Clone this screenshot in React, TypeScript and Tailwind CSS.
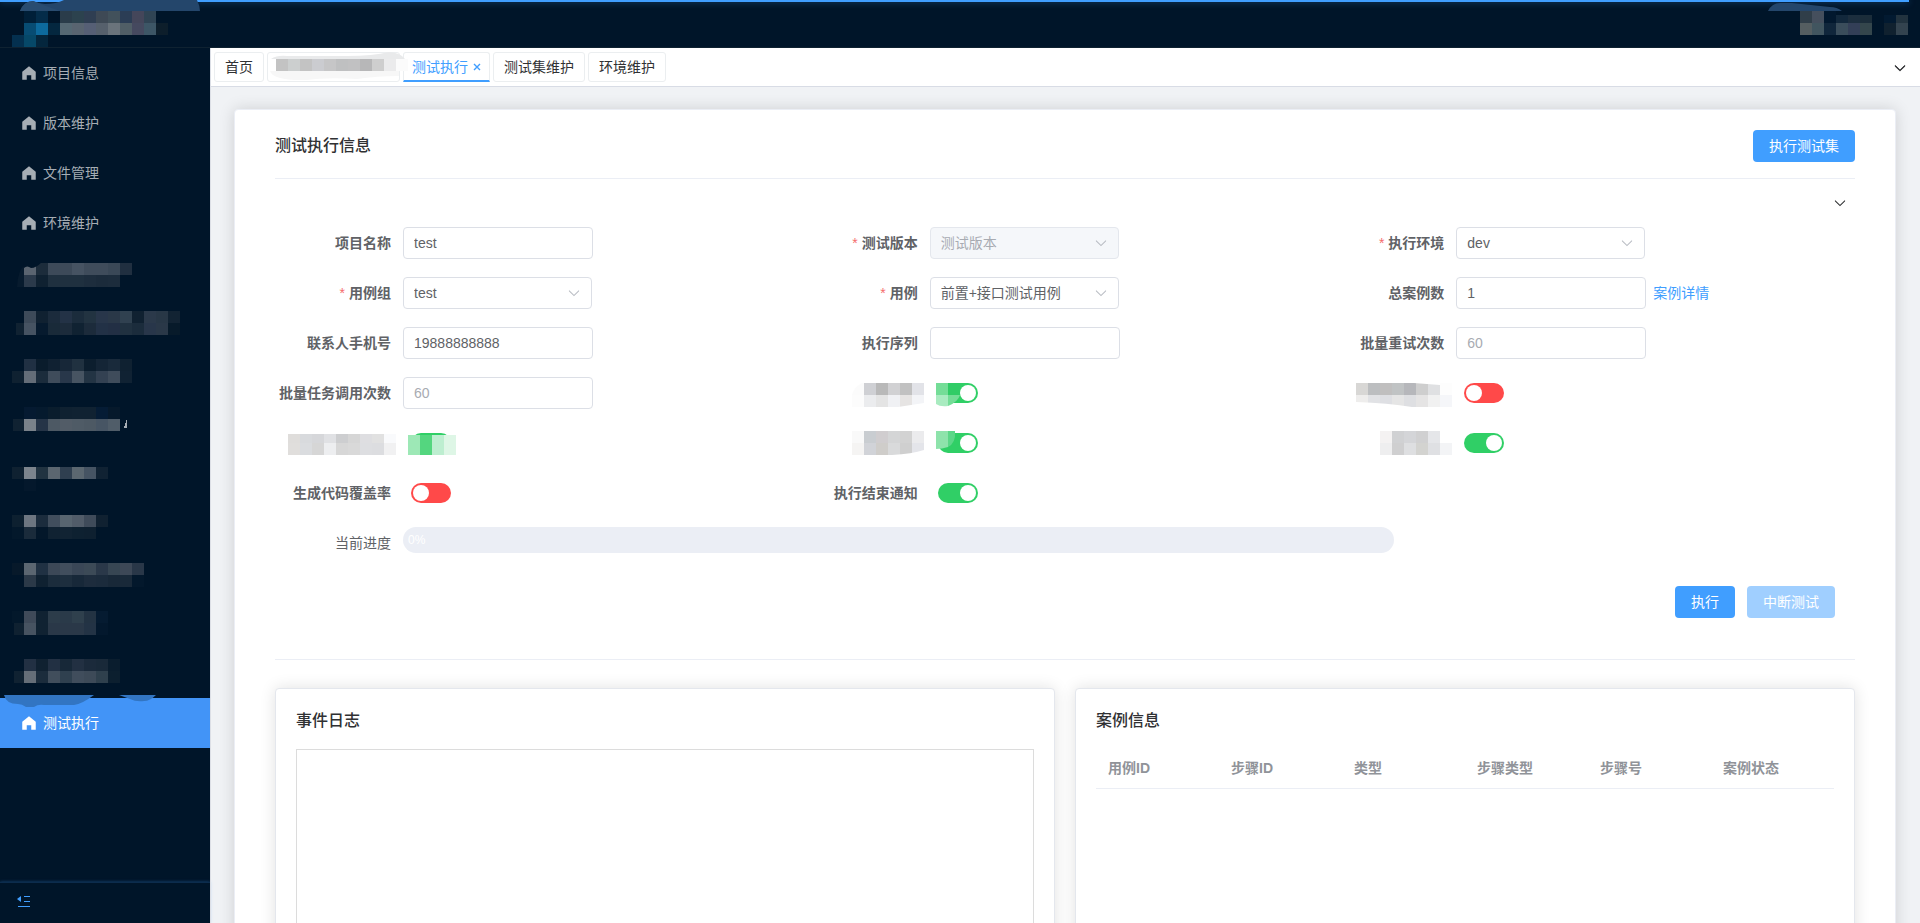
import { useState } from "react";
import type { ReactNode } from "react";

type Strip = { x: number; y: number; h?: number; c: string };

// One strip is a row of 12px blocks, colours listed left to right.
function Mosaic({ strips }: { strips: Strip[] }) {
  return (
    <>
      {strips.map((s, i) =>
        s.c.split(" ").map((c, j) => (
          <rect
            key={`${i}-${j}`}
            x={s.x + j * 12}
            y={s.y}
            width={12}
            height={s.h ?? 12}
            fill={`#${c}`}
            shapeRendering="crispEdges"
          />
        ))
      )}
    </>
  );
}

const hiddenMenus: Strip[][] = [
  [
    { x: 24, y: 15, c: "5a6470 1c2c3b 3d4a59 3d4a59 465362 3f4c5b 3f4c5b 3a4857 202f40" },
    { x: 24, y: 27, c: "2b3a4b 0f2131 1f303f 1f303f 1f303f 1d2d3d 1b2b3b 1c2c3c" },
  ],
  [
    { x: 24, y: 13, c: "3d4a59 102131 1b2b3c 233246 1b2c3c 223341 28364a 2a3848 304150 102131 2b394a 283746 122333" },
    { x: 16, y: 25, c: "102232" },
    { x: 24, y: 25, c: "465362 061a2e 192a39 1c2b3b 102232 1c2b3b 223146 222f44 203140 1b2c3c 28364a 2a3848 071a2a" },
  ],
  [
    { x: 24, y: 11, c: "203043 0a1c2c 102132 172738 203140 0c1e2e 142536 192a3b 0f2131" },
    { x: 12, y: 23, c: "0f2131 646d78 1b2c3c 3f4c5b 28374a 475462 233444 334152 3f4c5b 102233" },
  ],
  [
    { x: 24, y: 9, c: "051a31 051a2e 0a1d2d 0f2131 102232 102232 051c35 06192b" },
    { x: 13, y: 21, c: "102232" },
    { x: 24, y: 21, c: "7a828a 253447 4d5964 525c67 4f5b66 4d5964 475564 505d69" },
  ],
  [
    { x: 12, y: 19, c: "0f2131 7c848d 213341 5b6670 2f3f50 5b6770 465463 102233" },
    { x: 24, y: 31, c: "04182c" },
  ],
  [
    { x: 12, y: 17, c: "0d2030 6d7681 1b2c3d 414e5d 586570 515c69 3f4b5a 102131" },
    { x: 12, y: 29, c: "03182b 1a2b3b 03172a 102232 112333 0e2131 0e2030" },
  ],
  [
    { x: 12, y: 15, c: "07192a 5b6671 203143 3c4857 414e5d 3a4757 3c4a57 2a3849 374653 3d4857 293748" },
    { x: 24, y: 27, c: "2b3948 0f2131 1b2c3c 1d2e3e 172839 1d2c3d 1b2b3c 182838 192939 03182c" },
  ],
  [
    { x: 12, y: 13, c: "03182b 3f4a59 102232 2c3c4a 2a3a49 2f404d 233343 051b31" },
    { x: 14, y: 25, c: "0f2131" },
    { x: 24, y: 25, c: "475361 102232 2a3848 2a3848 2a3848 233345 03182d" },
  ],
  [
    { x: 24, y: 11, c: "223043 102131 223043 172838 223042 1b2a3b 192939 0a1d2e" },
    { x: 14, y: 23, c: "102232" },
    { x: 24, y: 23, c: "656e78 1b2c3c 414e5c 2f404f 404d5c 3d4a58 2f404d 0c1f2f" },
  ],
];

const menus = ["项目信息", "版本维护", "文件管理", "环境维护"];

const columns = ["用例ID", "步骤ID", "类型", "步骤类型", "步骤号", "案例状态"];

function HomeIcon() {
  return (
    <svg viewBox="0 0 1024 1024" className="size-[18px] shrink-0" fill="currentColor">
      <path d="M512 128 128 447.936V896h255.936V640H640v256h255.936V447.936z" />
    </svg>
  );
}

function ArrowDown({ weight = 0 }: { weight?: number }) {
  return (
    <svg
      viewBox="0 0 1024 1024"
      className="size-3.5"
      fill="currentColor"
      stroke="currentColor"
      strokeWidth={weight}
    >
      <path d="M831.872 340.864 512 652.672 192.128 340.864a30.592 30.592 0 0 0-42.752 0 29.12 29.12 0 0 0 0 41.6L489.664 714.24a32 32 0 0 0 44.672 0l340.288-331.712a29.12 29.12 0 0 0 0-41.728 30.592 30.592 0 0 0-42.752 0z" />
    </svg>
  );
}

function Field({
  id,
  label,
  required,
  children,
}: {
  id: string;
  label?: string;
  required?: boolean;
  children: ReactNode;
}) {
  return (
    <div className="relative flex h-8 items-center">
      <label htmlFor={id} className="w-32 shrink-0 pr-3 text-right font-bold whitespace-nowrap">
        {required && <span className="mr-1 font-normal text-[#f56c6c]">*</span>}
        {label}
      </label>
      {children}
    </div>
  );
}

function TextInput({ id, value, placeholder }: { id: string; value?: string; placeholder?: string }) {
  return (
    <input
      id={id}
      type="text"
      defaultValue={value}
      placeholder={placeholder}
      className="h-8 w-[190px] rounded border border-[#dcdfe6] bg-white px-2.5 outline-none placeholder:text-[#a8abb2] focus:border-[#409eff]"
    />
  );
}

function Select({ id, value, disabled }: { id: string; value: string; disabled?: boolean }) {
  return (
    <div className="relative w-[189px]">
      <select
        id={id}
        disabled={disabled}
        className="h-8 w-full appearance-none rounded border border-[#dcdfe6] bg-white px-2.5 outline-none disabled:border-[#e4e7ed] disabled:bg-[#f5f7fa] disabled:text-[#a8abb2] disabled:opacity-100"
      >
        <option>{value}</option>
      </select>
      <span className="pointer-events-none absolute inset-y-0 right-[11px] flex items-center text-[#b4b8bf]">
        <ArrowDown weight={20} />
      </span>
    </div>
  );
}

function Switch({ id, on, name }: { id: string; on?: boolean; name?: string }) {
  return (
    <input
      id={id}
      type="checkbox"
      role="switch"
      aria-label={name}
      defaultChecked={on}
      className="relative ml-2 h-5 w-10 cursor-pointer appearance-none rounded-full bg-[#ff4949] before:absolute before:top-0.5 before:left-0.5 before:size-4 before:rounded-full before:bg-white checked:bg-[#30cf66] checked:before:left-[22px]"
    />
  );
}

function Cover({ strips, children }: { strips: Strip[]; children?: ReactNode }) {
  return (
    <svg className="pointer-events-none absolute top-0 left-0 h-8 w-[190px]" viewBox="0 0 190 32">
      <Mosaic strips={strips} />
      {children}
    </svg>
  );
}

export default function App() {
  const [tab, setTab] = useState("测试执行");

  return (
    <div className="flex h-screen flex-col overflow-hidden bg-[#f0f2f5] font-['Liberation_Sans','Noto_Sans_CJK_SC',sans-serif] text-sm text-[#606266]">
      <header className="relative flex h-12 shrink-0 justify-between border-b border-[#0f2231] bg-[#001529]">
        <div className="absolute top-0 right-[11px] left-0 h-0.5 bg-[#409eff] shadow-[0_0_6px_#409eff80]" />
        <svg viewBox="0 0 210 48" className="relative h-12 w-[210px]">
          <path
            d="M20 11Q24 1 33 1Q39 4 45 4Q56 4 64 0H197Q200 6 200 11Z"
            fill="#24466b"
          />
          <path d="M20 11Q24 1 33 1Q39 3 46 6L60 11Z" fill="#294c70" />
          <Mosaic
            strips={[
              { x: 24, y: 11, c: "001f38 042c49" },
              { x: 60, y: 11, c: "2a3c4a 2c424e 2f3e52 3e4955 42515b 2b3d55 44465a 304454" },
              { x: 24, y: 23, c: "074c73 0d6a9d 04273f 556873 596470 565f75 56606c 6a737b 505e66 45495f 3d5666 0d1e2b" },
              { x: 12, y: 35, c: "04304f 064868 04263d" },
            ]}
          />
        </svg>
        <svg viewBox="0 0 160 48" className="relative h-12 w-40">
          <path d="M8 11Q12 3 20 3H32L70 7Q77 7 82 11Z" fill="#24466b" />
          <Mosaic
            strips={[
              { x: 40, y: 11, c: "303e49 454f5d 02182e" },
              { x: 76, y: 15, h: 8, c: "12283c 1c2e3e 1b2d3a" },
              { x: 124, y: 15, h: 8, c: "021a31 22333f" },
              { x: 40, y: 23, c: "555e61 41555f 10263b 3a4d5b 333f57 34464c" },
              { x: 124, y: 23, c: "10212f 33434f" },
            ]}
          />
        </svg>
      </header>

      <div className="flex min-h-0 flex-1">
        <aside className="flex w-[210px] shrink-0 flex-col bg-[#001529] text-[#a6adb4]">
          <nav className="flex-1">
            {menus.map((name) => (
              <a key={name} href="#" className="flex h-[50px] items-center gap-[5px] px-5">
                <HomeIcon />
                {name}
              </a>
            ))}
            {hiddenMenus.map((strips, i) => (
              <svg key={i} viewBox="0 0 210 50" className="block h-[50px] w-full">
                <Mosaic strips={strips} />
                {i === 0 && (
                  <>
                    <path d="M17 39Q18 22 24 18V39Z" fill="#071b2e" />
                    <path d="M23 14H42Q36 20 31 20Q27 17 24 20Z" fill="#001529" />
                  </>
                )}
                {i === 3 && <path d="M124 30V28H125V25H126V22H127V30Z" fill="#a6adb4" />}
              </svg>
            ))}
            <a
              href="#"
              className="relative flex h-[50px] items-center gap-[5px] bg-[#4294f7] px-5 text-white"
            >
              <svg viewBox="0 0 210 13" className="absolute bottom-full left-0 h-[13px] w-full translate-y-2.5">
                <path
                  d="M4 0H94Q82 9 74 10H44Q38 9 34 12H26Q22 9 18 9Q6 9 4 0Z"
                  fill="#3275c2"
                />
                <path d="M119 0H156Q150 6 144 6Q136 7 130 4Z" fill="#3275c2" />
              </svg>
              <HomeIcon />
              测试执行
            </a>
          </nav>
          <div className="flex h-[41px] items-start border-t border-[#0c2c4d] px-[17px] pt-3 shadow-[0_0_3px_#409eff66]">
            <button aria-label="收起菜单" className="text-[#409eff]">
              <svg viewBox="0 0 14 14" className="block size-3.5" fill="currentColor">
                <path d="M0 4 4 1V7Z" />
                <path d="M7 1H13V2H7ZM7 6H13V7H7ZM1 11H13V12H1Z" />
              </svg>
            </button>
          </div>
        </aside>

        <div className="flex min-w-0 flex-1 flex-col border-l border-[#dcdfe6]">
          <div className="flex h-[39px] shrink-0 items-start justify-between border-b border-[#d8dce5] bg-white pt-1 pr-[13px] pl-[3px] text-[#303133]">
            <div className="flex gap-[3px]">
              <button
                onClick={() => setTab("首页")}
                className="h-[30px] rounded-[3px] border border-[#ebeef0] px-2.5"
              >
                首页
              </button>
              <button aria-label="标签页" className="relative h-[30px] w-[133px] rounded-[3px] border border-[#ebeef0]">
                <svg viewBox="0 0 142 30" className="absolute -top-px -left-px z-10 h-[30px] w-[142px]">
                  <path d="M4 7Q10 3 20 4H80Q106 4 122 0Q134 1 138 7Z" fill="#e9eaeb" />
                  <path d="M3 19H132V24Q110 24 90 27Q60 25 40 28Q6 29 3 19Z" fill="#f7f7f7" />
                  <Mosaic
                    strips={[
                      { x: 9, y: 7, c: "c3c3c3 cccfcf c3c3c3 cbccd0 c6c6c7 bfc0c1 c1c1c2 b7b7b8 cecece ebebec fbfbfb" },
                    ]}
                  />
                </svg>
              </button>
              <div
                className={
                  tab === "测试执行"
                    ? "flex h-[30px] items-center gap-[5px] rounded-t-[3px] border border-b-2 border-[#ebeef0] border-b-[#409eff] px-2 text-[#409eff]"
                    : "flex h-[30px] items-center gap-[5px] rounded-[3px] border border-[#ebeef0] px-2"
                }
              >
                <button onClick={() => setTab("测试执行")}>测试执行</button>
                <button aria-label="关闭" className="flex size-2 items-center justify-center">
                  <svg viewBox="0 0 8 8" className="size-2" stroke="currentColor" strokeWidth="1.4">
                    <path d="M1 1 7 7M7 1 1 7" />
                  </svg>
                </button>
              </div>
              <button className="h-[30px] rounded-[3px] border border-[#ebeef0] px-2.5">测试集维护</button>
              <button className="h-[30px] rounded-[3px] border border-[#ebeef0] px-2.5">环境维护</button>
            </div>
            <button aria-label="更多" className="flex h-8 items-center">
              <ArrowDown weight={60} />
            </button>
          </div>

          <main className="flex-1 overflow-y-auto pt-[22px] pr-6 pb-6 pl-[23px] [scrollbar-width:none]">
            <section className="rounded border border-[#ebeef5] bg-white px-10 py-5 shadow-[0_0_16px_rgba(0,0,0,0.14)]">
              <div className="flex items-start justify-between border-b border-[#ebeef5] pb-4">
                <h2 className="text-base leading-8 font-medium text-[#303133]">测试执行信息</h2>
                <button className="h-8 rounded bg-[#409eff] px-4 text-white">执行测试集</button>
              </div>

              <div className="flex h-12 items-center justify-end pr-2 text-[#1f2023]">
                <button aria-label="折叠">
                  <ArrowDown weight={20} />
                </button>
              </div>

              <form className="grid grid-cols-3 gap-y-[18px]" onSubmit={(e) => e.preventDefault()}>
                <Field id="project" label="项目名称">
                  <TextInput id="project" value="test" />
                </Field>
                <Field id="version" label="测试版本" required>
                  <Select id="version" value="测试版本" disabled />
                </Field>
                <Field id="env" label="执行环境" required>
                  <Select id="env" value="dev" />
                </Field>

                <Field id="group" label="用例组" required>
                  <Select id="group" value="test" />
                </Field>
                <Field id="case" label="用例" required>
                  <Select id="case" value="前置+接口测试用例" />
                </Field>
                <Field id="total" label="总案例数">
                  <TextInput id="total" value="1" />
                  <a href="#" className="ml-[7px] text-[#409eff]">
                    案例详情
                  </a>
                </Field>

                <Field id="phone" label="联系人手机号">
                  <TextInput id="phone" value="19888888888" />
                </Field>
                <Field id="sequence" label="执行序列">
                  <TextInput id="sequence" />
                </Field>
                <Field id="retry" label="批量重试次数">
                  <TextInput id="retry" placeholder="60" />
                </Field>

                <Field id="calls" label="批量任务调用次数">
                  <TextInput id="calls" placeholder="60" />
                </Field>
                <Field id="option1">
                  <Switch id="option1" name="选项一" on />
                  <Cover
                    strips={[
                      { x: 50, y: 6, c: "fbfbfb cfd0d4 b9b9b9 d1d1d3 c1c1c1 e2e3e8" },
                      { x: 50, y: 18, c: "fcfcfc ebecee e4e4e4 f0f1f4 e6e4e3 f3f4f7" },
                      { x: 134, y: 6, c: "74dd97 30cc66" },
                    ]}
                  >
                    <path d="M134 18H146V29Q138 30 134 27Z" fill="#a9ebc0" />
                    <path d="M146 18H158Q156 25 146 29Z" fill="#74dd97" />
                    <path d="M96 30L122 26V30ZM50 6H60Q52 10 50 18Z" fill="#fff" />
                  </Cover>
                </Field>
                <Field id="option2">
                  <Switch id="option2" name="选项二" />
                  <Cover
                    strips={[
                      { x: 28, y: 6, c: "d8d7d5 bcbec0 c0bfbf c0c3c4 b6b7bb cecece dfe0e2 fdfdfd" },
                      { x: 28, y: 18, c: "eeedec e1e2e5 dedfe3 e5e5e5 dedfe2 e5e4e4 f1f1f1 f5f6f9" },
                    ]}
                  >
                    <path d="M28 25Q60 26 84 30H28ZM86 6H112V8Z" fill="#fff" />
                  </Cover>
                </Field>

                <Field id="option3">
                  <Switch id="option3" name="选项三" on />
                  <Cover
                    strips={[
                      { x: 13, y: 7, h: 9, c: "dfdddb d8dadd d6d7da e0e1e4 cdced0 d6d6d6 dedee1 e1e1e1 f9fafc" },
                      { x: 13, y: 16, c: "e0dedc dadcdf d6d6d6 edeef0 d7d7d7 d9d9d9 dddee1 dcdde0 f1f1f2" },
                      { x: 133, y: 8, h: 20, c: "9de8b6 54d67f bdeed0 def6e6" },
                    ]}
                  />
                </Field>
                <Field id="option4">
                  <Switch id="option4" name="选项四" on />
                  <Cover
                    strips={[
                      { x: 50, y: 4, c: "f9f9f9 c9cdd1 d0cdcf d4d5d6 d2d2d2 ebebed" },
                      { x: 50, y: 16, c: "f5f4f3 d1d3d8 cfcdca d9dadb cfcfcf e4e5ea" },
                    ]}
                  >
                    <path d="M90 28Q110 27 122 23V28Z" fill="#fff" />
                    <path d="M134 4H146V20Q140 22 134 22Z" fill="#8ee3ab" />
                    <path d="M146 4H153Q154 16 146 20Z" fill="#5cd788" />
                  </Cover>
                </Field>
                <Field id="option5">
                  <Switch id="option5" name="选项五" on />
                  <Cover
                    strips={[
                      { x: 52, y: 4, c: "f4f2f2 d0d1d3 d4d5d8 d0d0d1 e5e6e9" },
                      { x: 52, y: 16, c: "eeeeef cfcfd0 dedfe1 d3d3d0 dfe0e3 f3f4f6" },
                    ]}
                  />
                </Field>

                <Field id="coverage" label="生成代码覆盖率">
                  <Switch id="coverage" />
                </Field>
                <Field id="notify" label="执行结束通知">
                  <Switch id="notify" on />
                </Field>

                <div className="col-span-3 grid h-8 grid-cols-[17fr_7fr]">
                  <div className="flex items-start">
                    <span className="w-32 shrink-0 pr-3 text-right leading-8">当前进度</span>
                    <div
                      role="progressbar"
                      aria-label="当前进度"
                      aria-valuenow={0}
                      className="h-[26px] flex-1 rounded-full bg-[#ebeef5] px-[5px] text-xs leading-[26px] text-white"
                    >
                      0%
                    </div>
                  </div>
                </div>
              </form>

              <div className="mt-[27px] flex justify-end gap-3 border-b border-[#ebeef5] pr-5 pb-[41px]">
                <button className="h-8 rounded bg-[#409eff] px-4 text-white">执行</button>
                <button disabled className="h-8 rounded bg-[#a0cfff] px-4 text-white">
                  中断测试
                </button>
              </div>

              <div className="mt-7 grid grid-cols-2 gap-5">
                <section className="rounded border border-[#e4e7ed] bg-white p-5 shadow-[0_0_16px_rgba(0,0,0,0.12)]">
                  <h3 className="mb-4 text-base font-medium text-[#303133]">事件日志</h3>
                  <div className="h-[400px] border border-[#dcdcdc]" />
                </section>
                <section className="rounded border border-[#e4e7ed] bg-white p-5 shadow-[0_0_16px_rgba(0,0,0,0.12)]">
                  <h3 className="mb-4 text-base font-medium text-[#303133]">案例信息</h3>
                  <table className="w-full table-fixed text-left text-[#909399]">
                    <thead>
                      <tr className="h-[39px] border-b border-[#ebeef5]">
                        {columns.map((c) => (
                          <th key={c} className="px-3 font-bold">
                            {c}
                          </th>
                        ))}
                      </tr>
                    </thead>
                  </table>
                </section>
              </div>
            </section>
          </main>
        </div>
      </div>
    </div>
  );
}
